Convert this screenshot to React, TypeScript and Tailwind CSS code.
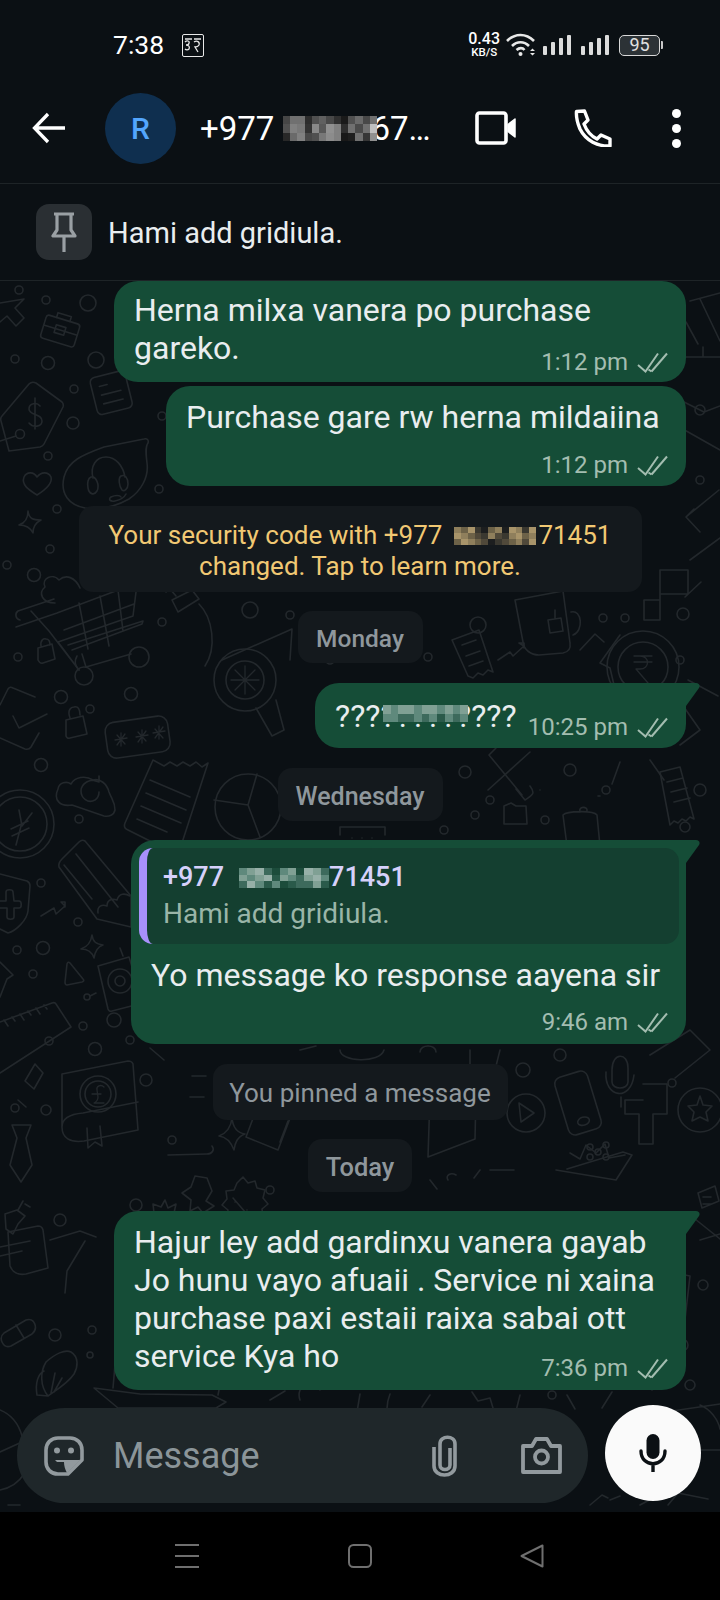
// App.tsx - dark chat screen
const ink = '#23282c';

// pixelated redaction blocks, one string of hex cells per row
function Mosaic({ rows, w, h, className }: { rows: string[][]; w: number; h: number; className?: string }) {
  const cols = rows[0].length;
  return (
    <svg width={w} height={h} viewBox={`0 0 ${cols} ${rows.length}`} preserveAspectRatio="none" shapeRendering="crispEdges" className={className} aria-hidden>
      {rows.map((r, y) => r.map((c, x) => <rect key={`${x}-${y}`} x={x} y={y} width={1.02} height={1.02} fill={c} />))}
    </svg>
  );
}

const grey = (s: string) => s.split(' ').map((v) => `#${v}${v}${v}`);
const headerBlur = [
  grey('46 70 70 2c 50 60 48 30 1a 50 6a 48 70'),
  grey('50 80 78 32 88 58 90 80 2e 70 4a 70 c0'),
  grey('28 6a 80 48 50 78 8c 80 18 1e 70 36 90'),
];
const tan = (s: string) =>
  s.split(' ').map((v) => ({ a: '#3a3830', b: '#6d6248', c: '#8f7f5c', d: '#a8946a', e: '#50493a', f: '#1c1e1f' }[v] as string));
const codeBlur = [tan('c b d a f b c f d c a d'), tan('d c b e a c e a c d b c'), tan('b d c b e f a e b c e d')];
const teal = (s: string) =>
  s.split(' ').map((v) => ({ a: '#3d6a5c', b: '#5f897c', c: '#80a094', d: '#97b0a8', e: '#2a5a4a', f: '#1c4c3b' }[v] as string));
const quoteBlur = [teal('b c d a f b c f d c a'), teal('c b c d e c b a c d b'), teal('a d b e b f e a a c e')];
const msgBlur = [teal('c b c c b c c b c b c'), teal('b b a a b a b e b a b')];

function Ticks() {
  return (
    <svg width={31} height={21} viewBox="0 0 31 21" fill="none" stroke="#a3bdb0" strokeWidth={2} aria-hidden>
      <path d="M1 13l7.500 6.500L21 1.500" />
      <path d="M14.500 19.500L30 1.500" />
      <path d="M11.500 17.500l3 2" />
    </svg>
  );
}

function Meta({ time, className }: { time: string; className?: string }) {
  return (
    <div className={`flex items-center justify-end gap-[9px] pr-[18px] text-[24px] leading-[28px] text-[#a3bdb0] ${className ?? ''}`}>
      <span>{time}</span>
      <Ticks />
    </div>
  );
}

function Tail() {
  return (
    <svg width={15} height={23} viewBox="0 0 15 23" className="absolute left-full top-0 -ml-px" aria-hidden>
      <path d="M0 0h11c3 0 4.500 2.500 3 5L1 23H0z" fill="#154d37" />
    </svg>
  );
}

function Pill({ children, className }: { children: React.ReactNode; className?: string }) {
  return (
    <div className={`self-center rounded-[14px] bg-[#14191d] text-center text-[#8f979c] ${className ?? ''}`}>{children}</div>
  );
}

function Wallpaper() {
  const dots: [number, number, number][] = [
    [19, 290, 4], [46, 300, 4], [88, 303, 8], [15, 359, 4], [48, 363, 6.5], [96, 360, 8], [74, 389, 4], [73, 423, 6], [48, 456, 4], [57, 509, 4],
    [50, 549, 4], [34, 575, 6.5], [7, 565, 4], [18, 657, 4], [162, 416, 4], [159, 489, 4], [162, 622, 4], [61, 697, 6.5], [90, 709, 4], [131, 694, 6.5],
    [41, 765, 6.5], [79, 819, 4], [41, 883, 4], [78, 922, 4], [43, 948, 6.5], [17, 950, 4], [33, 974, 4], [83, 1026, 4], [49, 1041, 4], [95, 1049, 6.5],
    [130, 1040, 4], [250, 610, 8], [290, 615, 4], [478, 625, 8], [603, 618, 4], [625, 618, 4], [683, 614, 6], [330, 660, 4], [428, 657, 4], [270, 1190, 4],
    [465, 772, 6], [490, 800, 4], [475, 815, 4], [570, 770, 6], [606, 790, 4], [700, 790, 6], [685, 827, 5], [545, 820, 4], [444, 830, 4], [560, 1055, 6],
    [523, 1070, 7], [672, 1083, 4], [146, 1080, 6], [15, 1108, 4], [46, 1110, 5], [172, 1140, 4], [136, 1205, 6], [55, 1335, 6], [92, 1330, 4], [90, 1355, 3],
    [60, 1220, 6], [690, 1385, 5], [682, 1345, 6], [505, 1375, 4], [552, 1395, 4], [703, 1285, 5], [700, 410, 5], [700, 480, 4], [700, 240, 4], [680, 660, 4],
  ];
  return (
    <svg viewBox="0 281 720 1231" className="absolute inset-0 h-full w-full" fill="none" stroke={ink} strokeWidth={1.6} strokeLinecap="round" strokeLinejoin="round" aria-hidden>
      {dots.map(([cx, cy, r], i) => <circle key={i} cx={cx} cy={cy} r={r} />)}
      {/* cursor */}
      <path d="M0 303l24 -4 -9 9 9 10 -8 8 -9 -10 -7 6" />
      {/* briefcase */}
      <g transform="rotate(17 60 330)"><rect x="43" y="319" width="35" height="24" rx="3" /><path d="M53 319v-5h14v5M43 330h35" /><rect x="55" y="326" width="10" height="8" /></g>
      {/* price tag */}
      <path d="M29 384q3-3 7-1l26 19q2 2 1 5l-19 37q-1 2-4 3l-31 4-8-30q-1-3 1-5z" />
      <circle cx="20" cy="434" r="4.500" />
      <path d="M16 436l-16 5M40 406c-3-4-11-3-11 3 0 7 13 4 13 12 0 6-9 7-13 2M35 398v31" />
      {/* note */}
      <g transform="rotate(-14 110 392)"><rect x="93" y="374" width="36" height="38" rx="5" /><path d="M101 384h8M101 393h20M101 402h20" /></g>
      {/* speech bubble with headset */}
      <path d="M64 477c4-16 18-22 40-30l40-8c3-1 5 1 4 4-3 4-2 12-1 20 2 14-6 28-18 36-14 8-30 11-44 9-16-3-25-14-21-31z" />
      <path d="M93 478c-3-12 3-21 13-21s17 9 19 20M91 477c5-1 9 8 6 14-3 5-8 3-9-3-1-5 0-10 3-11zM121 476c4-2 7 2 7 8 0 5-4 8-6 6-3-4-4-12-1-14zM126 494c-2 4-6 6-11 7-5 1-7-2-4-4 4-2 9-2 10 0" />
      {/* heart */}
      <path d="M37 495c-8-5-16-10-13-18 3-6 10-5 13 0 4-5 11-6 14 0 2 7-6 13-14 18z" />
      {/* sparkle */}
      <path d="M28 511c1 8 5 9 13 9-6 3-8 7-8 13-3-6-7-8-14-8 6-2 9-7 9-14z" />
      {/* cart */}
      <path d="M16 627l41-14 80-30-1 9-3 24-75 26 21 28-30-39-18-20M79 603l9 46M100 596l9 50M118 590l5 41M64 630l70-26M72 650l70-26 1-3-75 24" />
      <path d="M77 656c-3 5-2 10 2 14M82 654l4 13 45-13" />
      <circle cx="139" cy="657" r="10" />
      <circle cx="84" cy="676" r="9" />
      <path d="M20 620a5 5 0 0 1-2-9l36-12M55 603c-13 0-17-10-10-16-4-9 8-14 14-7 7-6 16-3 21 8" />
      <path d="M38 648l14-4 3 15-12 4c-3 1-4-1-5-3zM41 646c-1-6 3-8 5-7 3 0 4 3 4 6" />
      {/* check envelope */}
      <path d="M0 705l8-16q2-3 5-1l22 9M47 714L19 728l-6-12M39 733l-8 14q-2 3-6 2L0 738" />
      {/* padlock */}
      <path d="M66 720l17-4 4 18-17 4q-3 1-4-2zM70 718c-3-8 1-11 4-11 4-1 6 2 6 8" />
      {/* password */}
      <g transform="rotate(-8 138 736)"><rect x="106" y="719" width="63" height="36" rx="9" /></g>
      <path d="M115 740l12-2M121 733v13M117 745l8-11M117 735l8 9M136 737l12-2M142 730v13M138 742l8-11M138 732l8 9M153 733l12-2M159 726v13M155 738l8-11M155 729l8 9" strokeWidth={1.3} />
      {/* cloud */}
      <path d="M72 805c-12 2-19-5-14-16 1-7 9-8 13-5 4-7 14-9 22-4 7-2 14 4 16 12 3 8 6 10 6 18-1 5-6 7-11 6z" />
      <path d="M99 782c-9-5-18 2-18 9s7 13 14 9c3-2 4-5 4-8M92 780l7 2 0-6" />
      {/* yen coin */}
      <circle cx="20" cy="824" r="34" />
      <circle cx="20" cy="824" r="27" />
      <path d="M32 813l-10 13-3-16M11 829l17-8M12 836l17-8M21 826l-5 19" />
      {/* receipt */}
      <path d="M153 760l-28 63q-2 5 3 7l50 25 30-92-6 4-6-5-6 4-7-4-6 4-7-4-6 4z" />
      <path d="M150 780l40 17M146 793l40 17M141 806l40 17M137 819l30 13" />
      {/* pencil */}
      <path d="M59 867q-1-4 3-8l17-17q3-3 6-1l46 55 0 31-34-8z" />
      <path d="M64 865l28 34M76 854l42 53M98 913c-1-7 4-9 9-7 0-6 5-8 10-6 2-7 8-7 13-4" />
      {/* shield */}
      <path d="M0 874l27 7c2 1 3 3 3 5l-2 25c-1 9-12 20-20 22l-8-4" />
      <path d="M0 901h6v-9c0-3 7-3 7 0l1 9h5c3 0 3 7 0 7h-5l0 9c0 3-7 3-7 0v-9H0" />
      {/* trend arrow */}
      <path d="M41 916l13-8 2 6 9-8-4-4h4l0 5" />
      {/* sparkle 2 */}
      <path d="M92 935c1 7 4 9 11 10-6 2-8 7-9 13-2-6-7-9-13-9 6-2 10-7 11-14z" />
      {/* play triangle */}
      <path d="M70 963l13 16q2 2-1 3l-15 3q-2 0-2-3l2-18q1-3 3-1z" />
      {/* robot */}
      <path d="M98 966l31-9 14 46-31 8q-3 1-4-2zM96 993l-6 3M120 948l3 8" />
      <circle cx="120" cy="981" r="12" /><circle cx="120" cy="981" r="5" /><circle cx="87" cy="997" r="3" /><circle cx="114" cy="1020" r="7" />
      {/* ruler */}
      <path d="M0 1022l52-19q3-1 4 1l15 23-71 46M4 1020l4 6M12 1017l3 4M20 1014l4 6M28 1011l3 4M36 1008l4 6M44 1005l3 4" />
      {/* shield corner */}
      <path d="M0 962l13 13-6 4-7 18" />
      {/* pie */}
      <circle cx="248" cy="807" r="33" />
      <path d="M214 800l34 5 9-31M248 805l12 32" />
      {/* £ book */}
      <path d="M62 1074l66-13q4 0 5 3l5 66-54 11c-14 2-22-3-22-14zM62 1127c0-9 9-13 21-14l55-11" />
      <circle cx="98" cy="1094" r="18" /><circle cx="98" cy="1094" r="13" />
      <path d="M104 1087c-3-3-8-1-7 3l1 7c0 3-2 5-4 6h10M92 1094h9" strokeWidth={1.3} />
      <path d="M87 1128l1 20 7-6 7 4-2-20" />
      {/* tie */}
      <path d="M12 1125h19l-5 13 6 27-11 17-11-17 7-27z" />
      {/* apple star */}
      <path d="M35 1064l8 9-9 16-9-8zM26 1107l-8 -7" />
      {/* note scroll */}
      <path d="M168 1155l39-1c5 0 8-4 5-8M192 1076h14M190 1097h14" />
      <path d="M260 1100l32 13-14 37-32-13zM288 1121l-8 21" />
      {/* sparkles lower */}
      <path d="M232 1118c1 10 6 15 13 16-8 3-10 9-11 16-3-8-7-13-15-14 8-3 12-9 13-18z" />
      <path d="M165 1200l3 8 8-4-2 9 8 3-8 4 3 9-9-3-3 8-5-8-8 3 2-9-8-4 8-3-1-9 8 3z" />
      <path d="M195 1176l12 2 5 13-6 10 8 5-11 7-5-6-8 4 1-11-9-7 9-6z" />
      <path d="M243 1177l5 6 7-2 2 7 8 2-2 8 5 6-6 5 1 8-8 1-3 7-7-3-6 4-4-7-8-1 1-8-6-5 5-6-1-8 8-1 3-7z" />
      <path d="M233 1198l13 15M235 1202h0M247 1210h0" />
      {/* book with bubble */}
      <path d="M430 1095l43-4q3 0 3 3l-1 45-47 18zM438 1107h24M436 1118h22" />
      <path d="M430 1180l7 9M448 1180c-3-5 3-8 8-5M480 1170l-6 8M490 1170h24" />
      {/* play */}
      <circle cx="526" cy="1113" r="19" />
      <path d="M519 1103l15 10-13 9z" />
      {/* phone */}
      <g transform="rotate(-17 578 1103)"><rect x="561" y="1073" width="34" height="60" rx="7" /><ellipse cx="578" cy="1122" rx="6" ry="4" /></g>
      {/* mic */}
      <path d="M612 1070c0-18 16-18 16-2v14c0 8-16 8-16 0zM606 1072c-2 26 25 30 28 3M621 1097v10" />
      {/* blocks */}
      <path d="M643 1084h24v30h-14v30h-14v-30h-14v-14h18" />
      {/* star circle */}
      <circle cx="700" cy="1110" r="22" />
      <path d="M700 1096l3 9 9 1-6 6 2 9-8-4-8 4 2-9-6-6 9-1z" />
      {/* basket */}
      <path d="M556 1170l60 10 16-25-9-3-56 17M570 1153l10 6 6-14 10 8 9-9 4 14 16-3" />
      <circle cx="590" cy="1147" r="3" /><circle cx="598" cy="1152" r="3" /><circle cx="590" cy="1157" r="3" /><circle cx="606" cy="1145" r="3" /><circle cx="606" cy="1157" r="3" />
      <path d="M698 1193l17-7 4 15-17 7zM703 1197h8M703 1204h8" />
      {/* right column top */}
      <path d="M700 299l20 42M690 301l30-8M686 322l12 22M676 357h27v-10M703 357h17" />
      <path d="M686 517l33-27M700 532l-14-15 8-8M690 560l30-22" />
      <path d="M680 400l24 12 16-6M681 428l39 22" />
      <path d="M660 570h28v24h-28zM660 594v26h-16v-20h16M685 597l16-15" />
      {/* mug */}
      <path d="M515 600l48-9 7 52c1 6-2 9-7 10l-24 2c-8 0-15-5-16-13zM571 612c11-3 13 19 2 23M548 620l13-2 2 13-13 2zM555 618v-8" />
      {/* dryer */}
      <circle cx="245" cy="680" r="31" /><circle cx="245" cy="680" r="19" />
      <path d="M245 666v28M231 680h28M235 670l20 20M235 690l20-20" strokeWidth={1.3} />
      <path d="M222 660l70-31 -2 31M276 700l8 30-12 6-16-28" />
      {/* plug */}
      <path d="M172 600l20-10 7 9-21 13zM199 604c14 14 18 44 6 62M166 592l6-8M176 596l-6-7" />
      {/* receipt 2 */}
      <path d="M452 640l27-10 14 42-5-2-5 5-5-2-5 5-5-2zM462 645l14-5M466 656l14-5M469 666l14-5" />
      <path d="M498 660l12-8 3 4 11-10-5-3h5v5" />
      {/* rupee */}
      <path d="M620 635l-20 28 10 5 8 34M580 650l15-16 9 8" />
      <circle cx="643" cy="667" r="36" /><circle cx="643" cy="667" r="25" />
      <path d="M634 656h18M634 662h18M640 656c10 0 10 13 0 13h-4l12 14" strokeWidth={1.3} />
      <path d="M672 690l28 40-20 15M688 680l30 16" />
      {/* receipt 3 */}
      <path d="M660 772l20-5 14 52-4-2-4 4-4-2-4 4-4-2-4 4zM667 782l16-4M671 792l16-4M674 802l16-4" />
      {/* jar */}
      <path d="M563 815c4-4 30-5 34 0l6 62H571zM580 812c-2-6 8-6 7-1" />
      <path d="M504 806l7-3 5 3h10l1 18h-23z" />
      {/* tools */}
      <path d="M488 790l42-38M522 795l-33-40 7-7M530 786c6 8 2 9-5 14l-9-11M540 790h0" />
      <path d="M620 762l-8 22M650 760l14 20M600 796h-2" />
      <path d="M340 835v-8h45v8M352 838h0M362 838h0M372 838h0" />
      <path d="M300 1050l16-4M340 1050c0 12 40 14 44 0M420 1052c0-8 16-8 16 0M470 1050v14M500 1050l-5 20" />
      {/* middle lower strips */}
      <path d="M150 1048l14 12M650 1055l40 -25 20 20-35 28" />
      {/* pin */}
      <path d="M5 1214l12-4 8 6-7 8-5 10-7-5zM18 1210l5-9M25 1204l5 3" />
      {/* folder left */}
      <path d="M8 1232l30-6q4 0 5 4l5 38-22 6q-12 2-16-8zM0 1247l30-6M0 1256l22-5" />
      <path d="M85 1241l-18 30 -2 22M50 1240l30 -9 16 6" />
      {/* pill */}
      <path d="M4 1333l22-13c8-3 13 8 6 14L11 1346c-8 3-13-8-7-13zM16 1325l8 13" />
      {/* corn */}
      <path d="M46 1362c9-8 19-13 25-10 8 5 7 15 3 22-6 9-16 15-26 22-8-10-8-24-2-34zM44 1371c-6 3-9 12-7 24l11 1M55 1373l-4 20M62 1378l-8 14" />
      {/* laptop */}
      <path d="M94 1388l46 6 72 1 14 7-10 6H118zM113 1388l6-70M224 1365l-6 30" />
      <path d="M270 1400l15-9M300 1400c-5-14 12-24 20-10M360 1394l-4 24M390 1394c-4 10-4 20 0 24M430 1395l-8 12M472 1392l6 9 12-3 3 10M520 1395l-4 16M567 1395l8 14M612 1392l-10 16" />
      <path d="M0 1410c10 4 18 12 22 26M0 1490c10-2 19-8 24-16M0 1452l22-10M8 1505h12" />
      <path d="M652 1390c10-16 12-50 12-90M700 1405c10 4 18 14 20 24M665 1412l55-8M695 1450h25" />
      <path d="M590 1505l12-10 6 3M610 1500l10-4M640 1505l15-8M668 1505l10-12 30 6" />
      <path d="M605 1252l-14 120M660 1270l30 6-6 52" />
      <path d="M700 1240l20-6M690 1215l30 24" />
    </svg>
  );
}

export default function App() {
  return (
    <div className="flex h-[1600px] w-[720px] flex-col bg-black font-['Roboto',sans-serif] text-[#e9edef]">
      <header className="h-[184px] flex-none border-b border-[#1e2427] bg-[#0b1014]">
        {/* status bar */}
        <div className="flex h-[90px] items-center pl-[113px] pr-[57px] text-white">
          <span className="w-[49px] text-[26.500px] leading-none">7:38</span>
          <svg width={22} height={23} viewBox="0 0 22 23" fill="none" stroke="#e8e8e8" className="ml-[20px]" aria-hidden>
            <rect x="0.500" y="0.500" width="21" height="22" rx="1.500" />
            <path d="M3 8c2-2 5-1 4 1 0 2-2 2-3 2 3 0 4 2 3 4-1 1-3 1-4 0M3 5h7M12 5h7M12 8c3-2 6 0 5 3-1 2-3 2-4 2l3 5" strokeWidth={1.3} />
          </svg>
          <div className="ml-auto flex flex-col items-center font-medium">
            <span className="text-[16px] leading-[14px]">0.43</span>
            <span className="text-[11.500px] leading-[12px]">KB/S</span>
          </div>
          <svg width={31} height={24} viewBox="0 0 31 24" fill="none" stroke="#e8e8e8" strokeWidth={2.600} className="ml-[6px]" aria-hidden>
            <path d="M1 8c8-8 19-8 27 0M6 13c5-5 12-5 17 0M10.500 17c3-2.500 6-2.500 8 0" />
            <circle cx="14.500" cy="21" r="2" fill="#e8e8e8" stroke="none" />
            <path d="M24 18l2.500-2.500L29 18zM24 20l2.500 2.500L29 20z" fill="#e8e8e8" stroke="none" />
          </svg>
          <div className="ml-[6px] flex gap-[10px]">
            {[0, 1].map((n) => (
              <div key={n} className="flex h-[20px] items-end gap-[4px]">
                <i className="h-[9px] w-[4px] rounded-[1px] bg-[#dcdcdc]" />
                <i className="h-[13px] w-[4px] rounded-[1px] bg-[#dcdcdc]" />
                <i className="h-[17px] w-[4px] rounded-[1px] bg-[#dcdcdc]" />
                <i className="h-[20px] w-[4px] rounded-[1px] bg-[#dcdcdc]" />
              </div>
            ))}
          </div>
          <div className="ml-[10px] flex items-center">
            <div className="flex h-[21px] w-[41px] items-center justify-center rounded-[5px] border border-[#d8d8d8] bg-[#2c3236] text-[18px] leading-none text-[#e0e0e0]">95</div>
            <i className="ml-px h-[8px] w-[2px] rounded-r-[1px] bg-[#c8c8c8]" />
          </div>
        </div>
        {/* toolbar */}
        <div className="flex h-[76px] items-center">
          <svg width={34} height={32} viewBox="0 0 34 32" fill="none" stroke="#fff" strokeWidth={3.300} className="ml-[32px] flex-none" aria-hidden>
            <path d="M33 16H3M16 2L2.500 16 16 30" />
          </svg>
          <div className="ml-[39px] flex h-[71px] w-[71px] flex-none items-center justify-center rounded-full bg-[#0f2f4f] text-[30px] font-medium text-[#53a6fd]">R</div>
          <div className="ml-[24px] flex w-[240px] flex-none items-center text-[33px] leading-none text-white">
            <span>+977</span>
            <Mosaic rows={headerBlur} w={94} h={25} className="relative z-10 ml-[9px] flex-none" />
            <span className="-ml-[6px]">67…</span>
          </div>
          <svg width={42} height={34} viewBox="0 0 42 34" fill="none" stroke="#fff" strokeWidth={3.600} strokeLinejoin="round" className="ml-[35px] flex-none" aria-hidden>
            <rect x="2" y="2" width="29" height="30" rx="2.500" />
            <path d="M33 13.500l7-5.500v18l-7-5.500z" fill="#fff" strokeWidth={1.500} />
          </svg>
          <svg width={38} height={38} viewBox="0 0 38 38" fill="none" stroke="#fff" strokeWidth={3.400} strokeLinejoin="round" className="ml-[57px] flex-none" aria-hidden>
            <path d="M2.500 2.500l8-.5 3.500 9-4 4c3 8 8 12.500 13 15l4-4 9 4v7c-12 .5-24-5-30-17C3.500 14 2 8 2.500 2.500z" />
          </svg>
          <div className="ml-[60px] flex flex-none flex-col gap-[6px]">
            <i className="h-[9px] w-[9px] rounded-full bg-white" />
            <i className="h-[9px] w-[9px] rounded-full bg-white" />
            <i className="h-[9px] w-[9px] rounded-full bg-white" />
          </div>
        </div>
      </header>

      {/* pinned message */}
      <div className="flex h-[97px] flex-none items-center border-b border-[#1e2427] bg-[#0b1014] pl-[36px]">
        <div className="flex h-[56px] w-[56px] items-center justify-center rounded-[13px] bg-[#2a2f33]">
          <svg width={26} height={41} viewBox="0 0 26 41" fill="none" stroke="#9aa0a4" strokeWidth={3.200} strokeLinejoin="round" aria-hidden>
            <path d="M3 2h20M6 2v16l-4 6h22l-4-6V2M13 24v16" />
          </svg>
        </div>
        <span className="ml-[16px] mt-[3px] text-[29px] leading-none text-[#e9edef]">Hami add gridiula.</span>
      </div>

      {/* chat */}
      <main className="relative flex h-[1231px] flex-none flex-col overflow-hidden bg-[#0b1014] text-[32px] leading-[38px]">
        <Wallpaper />
        <div className="relative flex flex-col">
          <div className="mr-[34px] h-[101px] w-[572px] self-end rounded-[24px] bg-[#154d37] pl-[20px] pt-[10px]">
            <p>Herna milxa vanera po purchase<br />gareko.</p>
            <Meta time="1:12 pm" className="-mt-[19px]" />
          </div>
          <div className="mr-[34px] mt-[4px] h-[100px] w-[520px] self-end rounded-[24px] bg-[#154d37] pl-[20px] pt-[12px]">
            <p>Purchase gare rw herna mildaiina</p>
            <Meta time="1:12 pm" className="mt-[15px]" />
          </div>

          <Pill className="mt-[20px] h-[86px] w-[563px] pt-[14px] text-[26px] leading-[31px] text-[#f1c873]">
            <div className="flex items-center justify-center">
              <span>Your security code with +977</span>
              <Mosaic rows={codeBlur} w={82} h={18} className="ml-[12px]" />
              <span className="ml-[2px]">71451</span>
            </div>
            <div>changed. Tap to learn more.</div>
          </Pill>
          <Pill className="mt-[19px] h-[52px] w-[125px] pt-[2px] text-[24.500px] font-medium leading-[52px]">Monday</Pill>

          <div className="relative mr-[34px] mt-[20px] flex h-[65px] w-[371px] items-center self-end rounded-b-[24px] rounded-tl-[24px] bg-[#154d37] pl-[20px]">
            <Tail />
            <div className="relative w-[180px] flex-none whitespace-nowrap">
              ????????????
              <Mosaic rows={msgBlur} w={85} h={17} className="absolute left-[48px] top-[8px]" />
            </div>
            <Meta time="10:25 pm" className="mt-[23px] flex-1" />
          </div>

          <Pill className="mt-[20px] h-[53px] w-[165px] pt-[2px] text-[25px] font-medium leading-[53px]">Wednesday</Pill>

          <div className="relative mr-[34px] mt-[19px] h-[204px] w-[555px] self-end rounded-b-[24px] rounded-tl-[24px] bg-[#154d37] px-[8px] pt-[8px]">
            <Tail />
            <div className="h-[96px] w-[540px] overflow-hidden rounded-[14px] border-l-[8px] border-[#a890fb] bg-[#143f30] pl-[16px] pt-[13px]">
              <div className="flex items-center text-[27px] font-medium leading-[33px] text-[#d6d1fb]">
                <span>+977</span>
                <Mosaic rows={quoteBlur} w={90} h={20} className="ml-[15px]" />
                <span>71451</span>
              </div>
              <div className="mt-[3px] text-[28px] leading-[33px] text-[#9ab5a8]">Hami add gridiula.</div>
            </div>
            <p className="mt-[12px] pl-[12px] whitespace-nowrap">Yo message ko response aayena sir</p>
            <Meta time="9:46 am" className="mt-[14px] -mr-[8px]" />
          </div>

          <Pill className="mt-[20px] h-[56px] w-[295px] pt-[1px] text-[26px] leading-[56px]">You pinned a message</Pill>
          <Pill className="mt-[19px] h-[53px] w-[104px] pt-[2px] text-[25.500px] font-medium leading-[53px]">Today</Pill>

          <div className="relative mr-[34px] mt-[19px] h-[179px] w-[572px] self-end rounded-b-[24px] rounded-tl-[24px] bg-[#154d37] pl-[20px] pt-[12px]">
            <Tail />
            <p>Hajur ley add gardinxu vanera gayab<br />Jo hunu vayo afuaii . Service ni xaina<br />purchase paxi estaii raixa sabai ott<br />service Kya ho</p>
            <Meta time="7:36 pm" className="-mt-[21px]" />
          </div>

          {/* composer */}
          <div className="mt-[15px] flex items-start pl-[17px]">
            <div className="mt-[3px] flex h-[95px] w-[571px] flex-none items-center rounded-full bg-[#1f272a] pl-[27px]">
              <svg width={40} height={40} viewBox="0 0 40 40" fill="none" stroke="#929a9e" strokeWidth={3.600} aria-hidden>
                <path d="M14 2h12c7 0 12 5 12 12v10L24 38H14C7 38 2 33 2 26V14C2 7 7 2 14 2z" strokeLinejoin="round" />
                <circle cx="13" cy="14.500" r="3" fill="#929a9e" stroke="none" />
                <circle cx="27" cy="14.500" r="3" fill="#929a9e" stroke="none" />
                <path d="M11 24h25l-13 13c-2-4-3-7-3-11h-7" fill="#929a9e" stroke="none" />
              </svg>
              <span className="ml-[29px] w-[146px] flex-none text-[36px] leading-none text-[#8b9599]">Message</span>
              <svg width={26} height={42} viewBox="0 0 26 42" fill="none" stroke="#929a9e" strokeWidth={3.600} className="ml-[173px] flex-none" aria-hidden>
                <path d="M18 13v17c0 6-10 6-10 0V9c0-9 15-9 15 0v22c0 12-21 12-21 0V12" />
              </svg>
              <svg width={41} height={37} viewBox="0 0 41 37" fill="none" stroke="#929a9e" strokeWidth={3.800} className="ml-[63px] flex-none" aria-hidden>
                <path d="M2 9h9l4-7h11l4 7h9v26H2z" strokeLinejoin="round" />
                <circle cx="20.500" cy="20" r="6.500" />
              </svg>
            </div>
            <div className="ml-[17px] flex h-[96px] w-[96px] flex-none items-center justify-center rounded-full bg-[#fafafa]">
              <svg width={28} height={38} viewBox="0 0 28 38" fill="none" aria-hidden>
                <rect x="7.500" y="0" width="13" height="25" rx="6.500" fill="#0b1014" />
                <path d="M2 17c0 17 24 17 24 0M14 30v8" stroke="#0b1014" strokeWidth={3.400} strokeLinecap="round" />
              </svg>
            </div>
          </div>
        </div>
      </main>

      {/* navigation bar */}
      <nav className="flex flex-1 items-start bg-black pl-[175px] pt-[32px]">
        <svg width={24} height={24} viewBox="0 0 24 24" stroke="#6f6f6f" strokeWidth={2} aria-hidden>
          <path d="M0 1h24M0 12h24M0 23h24" />
        </svg>
        <svg width={24} height={24} viewBox="0 0 24 24" fill="none" stroke="#6f6f6f" strokeWidth={2} className="ml-[149px]" aria-hidden>
          <rect x="1" y="1" width="22" height="22" rx="4.500" />
        </svg>
        <svg width={24} height={24} viewBox="0 0 24 24" fill="none" stroke="#6f6f6f" strokeWidth={2} strokeLinejoin="round" className="ml-[148px]" aria-hidden>
          <path d="M22.500 1.500v21L1.500 12z" />
        </svg>
      </nav>
    </div>
  );
}
